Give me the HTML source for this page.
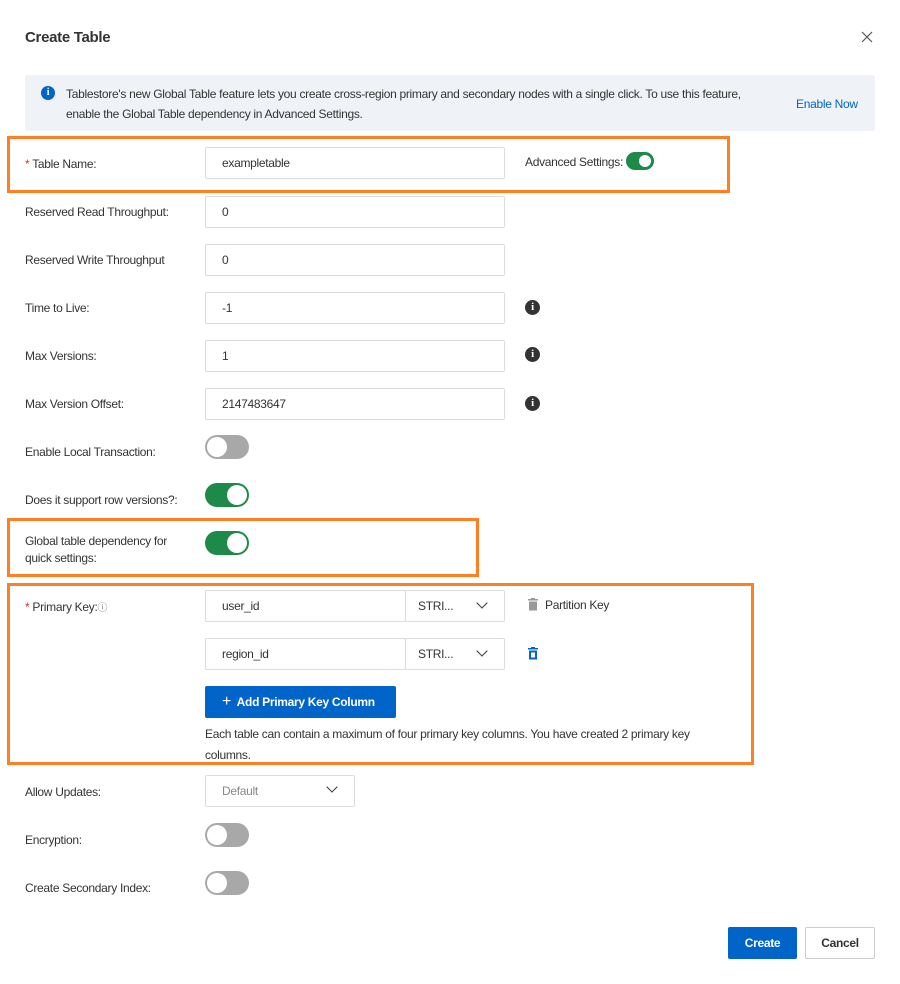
<!DOCTYPE html>
<html><head><meta charset="utf-8"><style>
*{box-sizing:border-box;margin:0;padding:0}
body{width:900px;height:984px;background:#fff;font-family:"Liberation Sans",sans-serif;font-size:12px;color:#333;position:relative;overflow:hidden;letter-spacing:-0.3px}
.a{position:absolute}
.lbl{position:absolute;left:25px;font-size:12px;color:#333}
.inp{position:absolute;left:205px;width:300px;height:32px;border:1px solid #dcdcdc;border-radius:2px;padding:0 16px;line-height:30px;color:#333}
.ob{position:absolute;border:3px solid #ff7f24}
.tg{position:absolute;left:205px;width:44px;height:24px;border-radius:12px;background:#a8a8a8}
.tg::after{content:"";position:absolute;top:2px;left:2px;width:20px;height:20px;border-radius:50%;background:#fff}
.tg.on{background:#1d8a4a}
.tg.on::after{left:22px}
.sm{position:absolute;left:626px;top:152px;width:28px;height:18px;border-radius:9px;background:#1d8a4a}
.sm::after{content:"";position:absolute;top:3px;left:13px;width:12px;height:12px;border-radius:50%;background:#fff}
.info{position:absolute;left:525px;width:15px;height:15px;border-radius:50%;background:#333;color:#fff;font-size:11px;font-weight:bold;text-align:center;line-height:15px;font-family:"Liberation Serif",serif}
.chev{position:absolute;width:8px;height:8px;border-right:1.5px solid #333;border-bottom:1.5px solid #333;transform:rotate(45deg)}
</style></head><body>
<div class="a" style="left:25px;top:29px;font-size:15px;font-weight:bold;color:#333">Create Table</div>
<svg class="a" style="left:861px;top:31px" width="12" height="12" viewBox="0 0 12 12"><path d="M1 1L11 11M11 1L1 11" stroke="#555" stroke-width="1.2"/></svg>
<div class="a" style="left:25px;top:75px;width:850px;height:56px;background:#eff3f8;border-radius:2px"></div>
<div class="a" style="left:41px;top:86px;width:14px;height:14px;border-radius:50%;background:#0064c8;color:#fff;font-size:10px;font-weight:bold;text-align:center;line-height:14px;font-family:'Liberation Serif',serif">i</div>
<div class="a" style="left:66px;top:84px;line-height:20px;color:#333;width:720px">Tablestore's new Global Table feature lets you create cross-region primary and secondary nodes with a single click. To use this feature,<br>enable the Global Table dependency in Advanced Settings.</div>
<div class="a" style="left:796px;top:97px;color:#0064c8">Enable Now</div>

<div class="ob" style="left:7px;top:136px;width:723px;height:57px"></div>
<div class="lbl" style="top:157px"><span style="color:#d93026">*</span> Table Name:</div>
<div class="inp" style="top:147px">exampletable</div>
<div class="a" style="left:525px;top:155px">Advanced Settings:</div>
<div class="sm"></div>

<div class="lbl" style="top:205px">Reserved Read Throughput:</div><div class="inp" style="top:196px">0</div>
<div class="lbl" style="top:253px">Reserved Write Throughput</div><div class="inp" style="top:244px">0</div>
<div class="lbl" style="top:301px">Time to Live:</div><div class="inp" style="top:292px">-1</div><div class="info" style="top:300px">i</div>
<div class="lbl" style="top:349px">Max Versions:</div><div class="inp" style="top:340px">1</div><div class="info" style="top:347px">i</div>
<div class="lbl" style="top:397px">Max Version Offset:</div><div class="inp" style="top:388px">2147483647</div><div class="info" style="top:396px">i</div>
<div class="lbl" style="top:445px">Enable Local Transaction:</div><div class="tg" style="top:435px"></div>
<div class="lbl" style="top:493px">Does it support row versions?:</div><div class="tg on" style="top:483px"></div>

<div class="ob" style="left:7px;top:518px;width:472px;height:59px"></div>
<div class="lbl" style="top:533px;line-height:17px">Global table dependency for<br>quick settings:</div><div class="tg on" style="top:531px"></div>

<div class="ob" style="left:7px;top:583px;width:747px;height:182px"></div>
<div class="lbl" style="top:599px"><span style="color:#d93026">*</span> Primary Key:<span style="font-size:10px;color:#777">ⓘ</span></div>
<div class="inp" style="top:590px;width:201px">user_id</div>
<div class="inp" style="top:590px;left:405px;width:100px;padding-left:12px">STRI...</div><div class="chev" style="left:478px;top:599px"></div>
<svg class="a" style="left:528px;top:598px" width="10" height="13" viewBox="0 0 10 13"><rect x="0" y="1" width="10" height="1.5" fill="#999"/><rect x="3" y="0" width="4" height="1.5" fill="#999"/><rect x="1" y="3.5" width="8" height="9" fill="#999"/></svg>
<div class="a" style="left:545px;top:598px">Partition Key</div>
<div class="inp" style="top:638px;width:201px">region_id</div>
<div class="inp" style="top:638px;left:405px;width:100px;padding-left:12px">STRI...</div><div class="chev" style="left:478px;top:647px"></div>
<svg class="a" style="left:528px;top:647px" width="10" height="13" viewBox="0 0 10 13"><rect x="0" y="1" width="10" height="1.5" fill="#0064c8"/><rect x="3" y="0" width="4" height="1.5" fill="#0064c8"/><rect x="1" y="3.5" width="8" height="9" fill="#0064c8"/><rect x="3" y="5.5" width="4" height="5" fill="#fff"/></svg>
<div class="a" style="left:205px;top:686px;width:191px;height:32px;background:#0064c8;border-radius:2px;color:#fff;font-weight:bold;line-height:32px;padding-left:17px"><span style="font-weight:normal;font-size:16px">+</span>&nbsp; Add Primary Key Column</div>
<div class="a" style="left:205px;top:724px;line-height:21px;width:520px">Each table can contain a maximum of four primary key columns. You have created 2 primary key columns.</div>

<div class="lbl" style="top:785px">Allow Updates:</div>
<div class="inp" style="top:775px;width:150px;color:#888">Default</div><div class="chev" style="left:328px;top:783px"></div>
<div class="lbl" style="top:833px">Encryption:</div><div class="tg" style="top:823px"></div>
<div class="lbl" style="top:881px">Create Secondary Index:</div><div class="tg" style="top:871px"></div>

<div class="a" style="left:728px;top:927px;width:69px;height:32px;background:#0064c8;border-radius:2px;color:#fff;font-weight:bold;text-align:center;line-height:32px">Create</div>
<div class="a" style="left:805px;top:927px;width:70px;height:32px;border:1px solid #ccc;border-radius:2px;font-weight:bold;text-align:center;line-height:30px">Cancel</div>
</body></html>
